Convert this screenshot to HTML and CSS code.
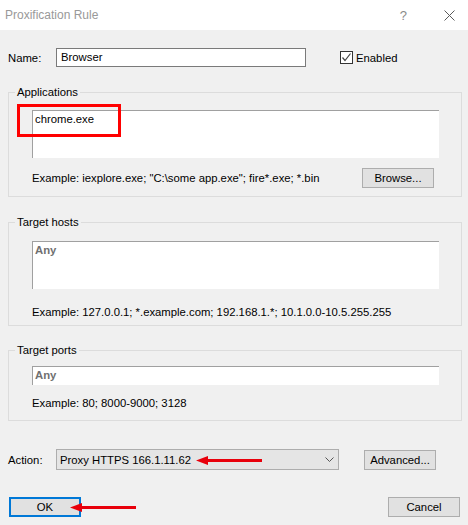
FILE: index.html
```html
<!DOCTYPE html>
<html lang="en">
<head>
    <meta charset="UTF-8">
    <title>Proxification Rule</title>
    <link rel="stylesheet" href="styles.css">
</head>
<body>
    <div class="window">
        <div class="titlebar">
            <span class="title">Proxification Rule</span>
            <span class="help">?</span>
            <svg class="close" width="11" height="11" viewBox="0 0 11 11">
                <path d="M0.5 0.5 L10.5 10.5 M10.5 0.5 L0.5 10.5" stroke="#5a5a5a" stroke-width="1" fill="none"/>
            </svg>
        </div>

        <div class="content">
            <div class="name-row">
                <label class="label">Name:</label>
                <div class="textbox name-box">Browser</div>
                <div class="check">
                    <span class="checkbox">
                        <svg width="11" height="11" viewBox="0 0 11 11">
                            <path d="M1.5 5.5 L4 8.5 L9.5 1.5" stroke="#444" stroke-width="1.2" fill="none"/>
                        </svg>
                    </span>
                    Enabled
                </div>
            </div>

            <fieldset class="group group-apps">
                <legend>Applications</legend>
                <div class="highlight-wrap">
                    <div class="listbox tall">chrome.exe</div>
                    <div class="red-box"></div>
                </div>
                <div class="example-row">
                    <span>Example: iexplore.exe; "C:\some app.exe"; fire*.exe; *.bin</span>
                    <button class="btn">Browse...</button>
                </div>
            </fieldset>

            <fieldset class="group group-hosts">
                <legend>Target hosts</legend>
                <div class="listbox tall"><b class="any">Any</b></div>
                <div class="example">Example: 127.0.0.1; *.example.com; 192.168.1.*; 10.1.0.0-10.5.255.255</div>
            </fieldset>

            <fieldset class="group group-ports">
                <legend>Target ports</legend>
                <div class="listbox short"><b class="any">Any</b></div>
                <div class="example">Example: 80; 8000-9000; 3128</div>
            </fieldset>

            <div class="action-row">
                <label class="label">Action:</label>
                <div class="combo">
                    <span>Proxy HTTPS 166.1.11.62</span>
                    <svg class="chevron" width="9" height="5" viewBox="0 0 9 5">
                        <path d="M0.5 0.5 L4.5 4.5 L8.5 0.5" stroke="#555" stroke-width="1" fill="none"/>
                    </svg>
                    <svg class="arrow arrow-action" width="66" height="11" viewBox="0 0 66 11">
                        <path d="M0 5.5 L12 1 L12 10 Z" fill="#e8000b"/>
                        <rect x="10" y="4" width="56" height="3" fill="#e8000b"/>
                    </svg>
                </div>
                <button class="btn">Advanced...</button>
            </div>

            <div class="button-row">
                <button class="btn default">OK</button>
                <svg class="arrow arrow-ok" width="66" height="11" viewBox="0 0 66 11">
                    <path d="M0 5.5 L12 1 L12 10 Z" fill="#e8000b"/>
                    <rect x="10" y="4" width="56" height="3" fill="#e8000b"/>
                </svg>
                <button class="btn">Cancel</button>
            </div>
        </div>
    </div>
</body>
</html>
```

FILE: styles.css
```css
:root {
    --face: #f0f0f0;
    --group-line: #dcdcdc;
    --button-face: #e1e1e1;
    --button-line: #adadad;
    --text: #000000;
}

body {
    margin: 0;
    font-family: "Liberation Sans", Arial, sans-serif;
    font-size: 11.3px;
    color: var(--text);
    background: var(--face);
}

.window {
    width: 468px;
    height: 525px;
    background: var(--face);
    overflow: hidden;
}

.titlebar {
    height: 30px;
    background: #ffffff;
    display: flex;
    align-items: center;
    padding-left: 5px;
}

.title {
    flex: 1;
    font-size: 12px;
    color: #999999;
}

.help {
    color: #8a8a8a;
    font-size: 13px;
    margin-right: 37px;
}

.close {
    margin-right: 13px;
}

.content {
    padding: 18px 6px 0 8px;
}

.name-row {
    display: flex;
    align-items: center;
    height: 19px;
}

.label {
    width: 48px;
}

.textbox {
    box-sizing: border-box;
    height: 19px;
    border: 1px solid #7a7a7a;
    background: #ffffff;
    padding: 1px 4px;
    line-height: 15px;
}

.name-box {
    width: 250px;
}

.check {
    display: flex;
    align-items: center;
    margin-left: 34px;
    gap: 3px;
}

.checkbox {
    box-sizing: border-box;
    width: 13px;
    height: 13px;
    border: 1px solid #333333;
    background: #ffffff;
    display: flex;
}

.group {
    margin: 0;
    border: 1px solid var(--group-line);
    padding: 0 24px 0 23px;
    min-width: 0;
}

.group legend {
    padding: 0 2px;
    margin-left: -17px;
    line-height: 14px;
}

.group-apps {
    margin-top: 18px;
    padding-top: 11px;
    padding-bottom: 8px;
}

.group-hosts {
    margin-top: 18px;
    padding-top: 12px;
    padding-bottom: 5px;
}

.group-ports {
    margin-top: 17px;
    padding-top: 9px;
    padding-bottom: 9px;
}

.listbox {
    box-sizing: border-box;
    width: 407px;
    background: #ffffff;
    border-top: 1px solid #a0a0a0;
    border-left: 1px solid #a0a0a0;
    padding: 1px 2px;
    line-height: 15px;
}

.tall {
    height: 48px;
}

.short {
    height: 19px;
}

.any {
    color: #707070;
}

.highlight-wrap {
    position: relative;
}

.red-box {
    position: absolute;
    left: -15px;
    top: -6px;
    width: 104px;
    height: 33px;
    box-sizing: border-box;
    border: 3px solid #ff0000;
}

.example-row {
    display: flex;
    align-items: center;
    justify-content: space-between;
    margin-top: 10px;
    padding-right: 3px;
}

.example {
    margin-top: 16px;
    line-height: 15px;
}

.group-ports .example {
    margin-top: 11px;
}

.btn {
    box-sizing: border-box;
    width: 72px;
    height: 20px;
    background: var(--button-face);
    border: 1px solid var(--button-line);
    font-family: inherit;
    font-size: 11.3px;
    color: var(--text);
    padding: 0;
}

.btn.default {
    border: 2px solid #0078d7;
}

.action-row {
    display: flex;
    align-items: center;
    margin-top: 28px;
    height: 21px;
}

.combo {
    position: relative;
    box-sizing: border-box;
    width: 283px;
    height: 21px;
    background: #e5e5e5;
    border: 1px solid var(--button-line);
    display: flex;
    align-items: center;
    padding-left: 3px;
    margin-right: 25px;
}

.combo span {
    flex: 1;
}

.chevron {
    margin-right: 4px;
}

.arrow {
    position: absolute;
}

.arrow-action {
    left: 139px;
    top: 5px;
}

.button-row {
    position: relative;
    display: flex;
    justify-content: space-between;
    margin-top: 27px;
    padding-left: 1px;
    padding-right: 2px;
}

.arrow-ok {
    left: 62px;
    top: 5px;
}
```
